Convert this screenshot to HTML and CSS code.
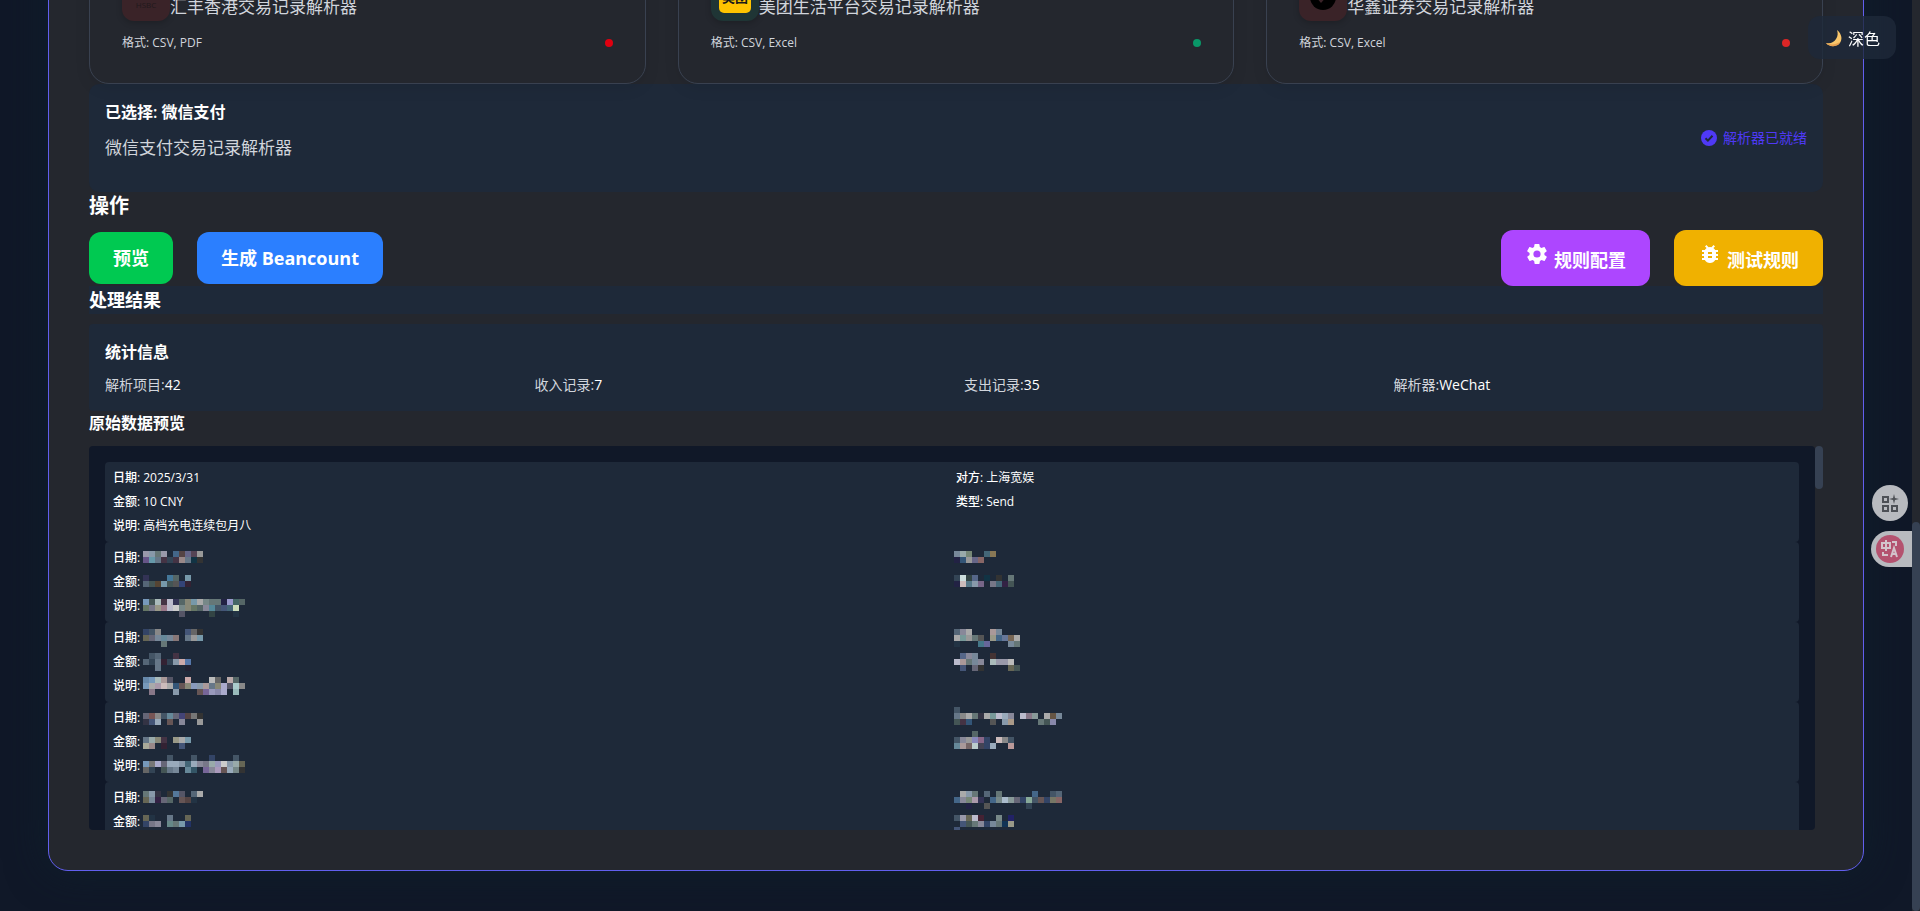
FILE: index.html
```html
<!DOCTYPE html>
<html lang="zh-CN">
<head>
    <meta charset="UTF-8">
    <meta name="viewport" content="width=device-width, initial-scale=1.0">
    <title>账单解析器</title>
    <link rel="stylesheet" href="styles.css">
</head>
<body>

<main class="panel">
    <!-- Parser cards -->
    <div class="cards">
        <div class="card">
            <div class="card-head">
                <svg class="card-icon red" viewBox="0 0 48 48">
                    <text x="24" y="35" text-anchor="middle" font-size="8" fill="#21191c">HSBC</text>
                </svg>
                <span>汇丰香港交易记录解析器</span>
            </div>
            <div class="card-meta"><span>格式: CSV, PDF</span><i class="dot dot-red"></i></div>
        </div>
        <div class="card">
            <div class="card-head">
                <svg class="card-icon green" viewBox="0 0 48 48">
                    <rect x="8" y="8" width="32" height="32" rx="5" fill="#ffc300"/>
                    <text x="24" y="29" text-anchor="middle" font-size="13" font-weight="700" fill="#1a1a1a">美团</text>
                </svg>
                <span>美团生活平台交易记录解析器</span>
            </div>
            <div class="card-meta"><span>格式: CSV, Excel</span><i class="dot dot-green"></i></div>
        </div>
        <div class="card">
            <div class="card-head">
                <svg class="card-icon red" viewBox="0 0 48 48">
                    <circle cx="24" cy="24" r="13" fill="#000"/>
                    <path d="M17 24l5 6 7-8-4-2-3 3z" fill="#3a2328"/>
                </svg>
                <span>华鑫证券交易记录解析器</span>
            </div>
            <div class="card-meta"><span>格式: CSV, Excel</span><i class="dot dot-red2"></i></div>
        </div>
    </div>

    <section class="selected">
        <div>
            <h3>已选择: 微信支付</h3>
            <p>微信支付交易记录解析器</p>
        </div>
        <div class="ready">
            <svg width="16" height="16" viewBox="0 0 16 16">
                <circle cx="8" cy="8" r="8" fill="#4f39f6"/>
                <path d="M4.5 8.2l2.4 2.4 4.6-4.8" fill="none" stroke="#1e2939" stroke-width="2"/>
            </svg>
            <span>解析器已就绪</span>
        </div>
    </section>

    <h2 class="actions-title">操作</h2>
    <div class="actions">
        <button type="button" class="btn btn-green">预览</button>
        <button type="button" class="btn btn-blue">生成 Beancount</button>
        <button type="button" class="btn btn-tall btn-purple">
            <svg width="24" height="24" viewBox="0 0 24 24" fill="currentColor">
                <path d="M19.4 13c.04-.3.06-.65.06-1s-.02-.7-.07-1l2.1-1.6c.2-.15.25-.4.13-.6l-2-3.5c-.12-.2-.37-.3-.6-.2l-2.5 1c-.5-.4-1.07-.74-1.7-1l-.37-2.6a.5.5 0 0 0-.5-.4h-4a.5.5 0 0 0-.5.4l-.37 2.6c-.6.26-1.17.6-1.7 1l-2.5-1c-.22-.1-.47 0-.6.2l-2 3.5c-.12.2-.07.46.13.6L4.6 11a7 7 0 0 0 0 2l-2.1 1.6c-.2.15-.25.4-.13.6l2 3.5c.12.2.37.3.6.2l2.5-1c.52.4 1.08.74 1.7 1l.37 2.6c.04.24.25.4.5.4h4c.25 0 .46-.16.5-.4l.37-2.6c.6-.26 1.17-.6 1.7-1l2.5 1c.22.1.47 0 .6-.2l2-3.5c.12-.2.07-.46-.13-.6zM12 15.6a3.6 3.6 0 1 1 0-7.2 3.6 3.6 0 0 1 0 7.2z"/>
            </svg>
            <span>规则配置</span>
        </button>
        <button type="button" class="btn btn-tall btn-yellow">
            <svg width="24" height="24" viewBox="0 0 24 24" fill="currentColor">
                <path d="M20 8h-2.8a6 6 0 0 0-1.8-2L17 4.400 15.600 3l-2.200 2.200a6 6 0 0 0-2.800 0L8.400 3 7 4.400 8.600 6a6 6 0 0 0-1.800 2H4v2h2.100c-.06.300-.1.700-.1 1v1H4v2h2v1c0 .300.040.700.1 1H4v2h2.800a6 6 0 0 0 10.400 0H20v-2h-2.100c.06-.300.1-.700.1-1v-1h2v-2h-2v-1c0-.300-.040-.700-.1-1H20zm-6 8h-4v-2h4zm0-4h-4v-2h4z"/>
            </svg>
            <span>测试规则</span>
        </button>
    </div>

    <h2 class="result-title">处理结果</h2>

    <section class="stats">
        <h3>统计信息</h3>
        <div class="stats-grid">
            <div>解析项目:<b>42</b></div>
            <div>收入记录:<b>7</b></div>
            <div>支出记录:<b>35</b></div>
            <div>解析器:<b>WeChat</b></div>
        </div>
    </section>

    <h3 class="raw-title">原始数据预览</h3>
    <div class="raw">
        <div class="raw-list" id="rawList">
            <div class="record">
                <div><b>日期:</b> 2025/3/31</div>
                <div><b>对方:</b> 上海宽娱</div>
                <div><b>金额:</b> 10 CNY</div>
                <div><b>类型:</b> Send</div>
                <div><b>说明:</b> 高档充电连续包月八</div>
            </div>
        </div>
        <div class="raw-bar"><div class="raw-thumb"></div></div>
    </div>
</main>

<button type="button" class="theme">
    <svg width="20" height="20" viewBox="0 0 20 20">
        <path d="M13 2c5 4 6 10 2 14-4 3-10 3-13-1 5 1 8-1 10-4 2-3 2-6 1-9z" fill="#f9c66b"/>
        <path d="M2 15c4 4 10 4 13 1l1-2c-5 3-9 3-14 1z" fill="#e8a050"/>
    </svg>
    <span>深色</span>
</button>

<button type="button" class="float-apps" aria-label="应用">
    <svg width="18" height="18" viewBox="0 0 18 18" fill="none" stroke="#4d5056" stroke-width="2">
        <path d="M2 3h5v5H2zM2 12h5v5H2zM11 12h5v5h-5z"/>
        <path d="M13 0l1 4 4 1-4 1-1 4-1-4-4-1 4-1z" fill="#4d5056" stroke="none"/>
    </svg>
</button>
<button type="button" class="float-lang" aria-label="翻译">
    <svg width="28" height="28" viewBox="0 0 28 28">
        <circle cx="14" cy="14" r="14" fill="#b4526f"/>
        <g fill="none" stroke="#d3c3cb" stroke-width="2">
            <path d="M6 8h8v5H6zM10 5v11"/>
            <path d="M16 7h4v4M7 17v3h5"/>
            <path d="M15 22l3-9 3 9M16 19h4"/>
        </g>
    </svg>
</button>

<div class="page-bar"><div class="page-thumb"></div></div>

<script src="records.js"></script>
</body>
</html>
```
FILE: styles.css
```css
* {
    box-sizing: border-box;
}

body {
    margin: 0;
    height: 100vh;
    overflow: hidden;
    padding: 0 56px 0 48px;
    background: #101828;
    color: #fff;
    font-family: "Open Sans", "Noto Sans CJK SC", sans-serif;
    font-size: 16px;
    line-height: 24px;
}

h2, h3, p {
    margin: 0;
}

button {
    font-family: inherit;
    border: none;
    cursor: pointer;
}

/* main panel, scrolled so its top is out of view */
.panel {
    margin-top: -101px;
    padding: 40px;
    background: #24272e;
    border: 1px solid #625fee;
    border-radius: 20px;
    box-shadow: 0 0 40px rgba(15, 32, 44, 0.8);
}

/* Cards */
.cards {
    display: grid;
    grid-template-columns: repeat(3, 1fr);
    gap: 32px;
}

.card {
    padding: 32px;
    border: 1px solid #394150;
    border-radius: 20px;
    box-shadow: 0 4px 16px rgba(0, 0, 0, 0.08);
}

.card-head {
    display: flex;
    align-items: flex-end;
    font-size: 17px;
    line-height: 28px;
    color: #d1d5dc;
}

.card-icon {
    width: 48px;
    height: 48px;
    border-radius: 12px;
    box-shadow: 0 2px 6px rgba(0, 0, 0, 0.2);
}

.red {
    background: #3a2328;
}

.green {
    background: #1f3535;
}

.card-meta {
    display: flex;
    justify-content: space-between;
    align-items: center;
    margin-top: 14px;
    font-size: 12px;
    line-height: 16px;
    color: #d1d5dc;
}

.dot {
    width: 8px;
    height: 8px;
    border-radius: 50%;
}

.dot-red {
    background: #e00010;
}

.dot-green {
    background: #099768;
}

.dot-red2 {
    background: #dc2626;
}

/* Selected parser */
.selected {
    display: flex;
    justify-content: space-between;
    align-items: center;
    padding: 16px;
    background: #1e2939;
    border-radius: 10px;
}

h3 {
    font-size: 16px;
    line-height: 24px;
    font-weight: 600;
}

.selected p {
    margin: 10px 0 14px;
    font-size: 17px;
    line-height: 28px;
    color: #d1d5dc;
}

.ready {
    display: flex;
    align-items: center;
    gap: 6px;
    font-size: 14px;
    color: #4f39f6;
}

/* Action buttons */
.actions-title {
    font-size: 20px;
    line-height: 28px;
}

.actions {
    display: flex;
    align-items: center;
    gap: 24px;
    margin-top: 10px;
}

.btn {
    height: 52px;
    padding: 0 24px;
    border-radius: 12px;
    color: #fff;
    font-size: 18px;
    font-weight: 700;
    line-height: 28px;
}

.btn-tall {
    display: flex;
    align-items: flex-start;
    gap: 5px;
    height: 56px;
    padding-top: 12px;
}

.btn-tall span {
    margin-top: 4px;
}

.btn-green {
    background: #00c951;
}

.btn-blue {
    background: #2b7fff;
}

.btn-purple {
    margin-left: auto;
    background: #ad46ff;
}

.btn-yellow {
    background: #f0b100;
}

/* Results */
.result-title {
    font-size: 18px;
    line-height: 28px;
    background: #1e2939;
}

.stats {
    margin-top: 10px;
    padding: 16px;
    background: #1e2939;
    border-radius: 4px;
}

.stats-grid {
    display: grid;
    grid-template-columns: repeat(4, 1fr);
    gap: 16px;
    margin-top: 10px;
    font-size: 14px;
    line-height: 21px;
    color: #d1d5dc;
}

.stats-grid b {
    font-weight: 400;
    color: #fff;
}

.raw-title {
    margin-bottom: 11px;
}

.raw {
    display: flex;
    height: 384px;
}

.raw-list {
    flex: 1;
    overflow: hidden;
    padding: 16px;
    background: #101828;
    border-radius: 4px;
}

.record {
    display: grid;
    grid-template-columns: 1fr 1fr;
    gap: 8px;
    padding: 8px;
    background: #1e2939;
    border-radius: 4px;
    font-size: 12px;
    line-height: 16px;
}

.record > div {
    display: flex;
    gap: 3px;
    height: 16px;
}

.record b {
    font-weight: 500;
}

.mosaic {
    width: 120px;
    height: 16px;
    overflow: visible;
}

.raw-bar {
    width: 8px;
}

.raw-thumb {
    height: 43px;
    background: #364153;
    border-radius: 4px;
}

/* Things that float over the page */
.theme {
    position: fixed;
    top: 16px;
    right: 24px;
    display: flex;
    align-items: center;
    gap: 4px;
    height: 43px;
    padding: 0 16px;
    border-radius: 12px;
    background: rgba(30, 41, 57, 0.8);
    color: #fff;
    font-size: 16px;
}

.float-apps,
.float-lang {
    position: fixed;
    display: flex;
    align-items: center;
    height: 36px;
    background: #b8babf;
}

.float-apps {
    top: 485px;
    right: 12px;
    width: 36px;
    justify-content: center;
    padding: 0;
    border-radius: 50%;
}

.float-lang {
    top: 531px;
    right: 8px;
    width: 41px;
    padding: 0 5px;
    border-radius: 18px 0 0 18px;
}

.page-bar {
    position: fixed;
    top: 0;
    right: 0;
    bottom: 0;
    width: 8px;
    padding-top: 522px;
    background: #24272e;
}

.page-thumb {
    height: 100%;
    background: #364153;
    border-radius: 4px;
}
```
FILE: records.js
```js
// Masked records: each value is a mosaic of 6px cells.
// Rows are split by "/", cells are 3-digit colours, "." is an empty cell.
const CELL = 6;

const records = [
    {
        dy: 1,
        date: '99a 89a 677 99a . 468 544 668 545 999/658 69a 678 434 345 434 988 678 134 333',
        payee: '789 9aa 787 . . 467 875/224 357 999 668 866',
        amount: '335 . . . 479 566 . 79a/567 455 543 79a 455 555 347 323',
        type: '345 cdd 344 568 . 134 . 333 . 677/224 cbb 578 89a 768 . 778 467 324 455',
        note: '79b 455 abb 434 bbc 335 566 887 79a aaa 788 677 677 224 99c 466 566/676 778 998 978 bbc ccc 788 887 676 566 889 589 456 457 467 cdb ./. . . . . . 556 . . . . 344 . . . 234'
    },
    {
        dy: -1,
        date: '346 456 888 . . . . 457 666 333/665 667 789 689 789 877 . 678 999 79a/. . . 677',
        payee: '567 889 aaa . . . a99 789/aaa 799 999 677 555 . 998 468 679 765 aaa/234 . . . 478 669 . . . 789 677',
        amount: '. 456 567 . . 434/567 345 678 323 345 89a caa 57a/. . 678 . . . . 223',
        type: '. 568 889 789 . . 433/bbc a99 677 789 889 . abb 99a 99a bbb/. 457 . 667 333 . . . . 665 455',
        note: '68a 79b abb a99 556 . . caa . . . bbb 666 . baa 566/79b aaa a9a cbb aaa 357 655 887 89b 89a a99 678 887 aac 556 acc 888/. 878 . . . 89a . . . 655 769 99b 88a aac . 9bb'
    },
    {
        dy: -3,
        date: './667 755 888 456 689 667 447 544 777 333/334 457 9ab . 655 . 889 . . 999',
        payee: '456/678 888 aaa 677 334 aaa 799 bbc 9ab 889 . bbc 878 899 . aaa 654 789/455 434 357 . . . 555 . 89a a98 . . . . 677 455 88a',
        amount: './678 9aa 887 434 . 998 aaa 79a/aa9 988 . 323 . . 457',
        type: '. . . 566/456 889 999 88b 868 346 . cbb 888 456/689 a99 766 bcc 445 346 9ab . . b99',
        note: '. . . . 456 . . . 456 . . 346 . . . 456/79b 777 aac 667 9ab 9ab 89a 467 9ab 889 778 9aa 99b ccc 89a 9aa 665/666 345 . 455 678 789 . 689 356 . 769 889 a9b 655 9ab 788 333'
    },
    {
        dy: 1,
        date: '677 89a 334 . 333 579 556 . 567 aaa/665 789 324 667 566 . 655 544 234',
        payee: '. aaa 89a 677 . 567 . 677 . . . . . 468 . . 456 567/468 889 787 a9a 335 . 468 788 abc 899 667 346 8a9 456 655 346 776 866/. . 224 . . 555 . . . . . . 345',
        amount: '665 234 . . 678 . . 665/346 778 889 . 688 677 79a 236',
        type: '456 99a 665 bbc 423 . . 788 . 226/. 457 455 677 889 346 789 677 135 998/457',
        note: ''
    }
];

function mosaic(data, x, dy) {
    let cells = '';
    data.split('/').forEach((row, r) => {
        row.split(' ').forEach((color, c) => {
            if (color && color !== '.') {
                cells += `<rect x="${x + c * CELL}" y="${dy + r * CELL}" width="${CELL}" height="${CELL}" fill="#${color}"/>`;
            }
        });
    });
    return `<svg class="mosaic">${cells}</svg>`;
}

const list = document.getElementById('rawList');
records.forEach(item => {
    const record = document.createElement('div');
    record.className = 'record';
    record.innerHTML = `
        <div><b>日期:</b>${mosaic(item.date, 0, item.dy)}</div>
        <div>${mosaic(item.payee, -2, item.dy)}</div>
        <div><b>金额:</b>${mosaic(item.amount, 0, item.dy)}</div>
        <div>${mosaic(item.type, -2, item.dy)}</div>
        <div><b>说明:</b>${mosaic(item.note, 0, item.dy)}</div>`;
    list.appendChild(record);
});
```
